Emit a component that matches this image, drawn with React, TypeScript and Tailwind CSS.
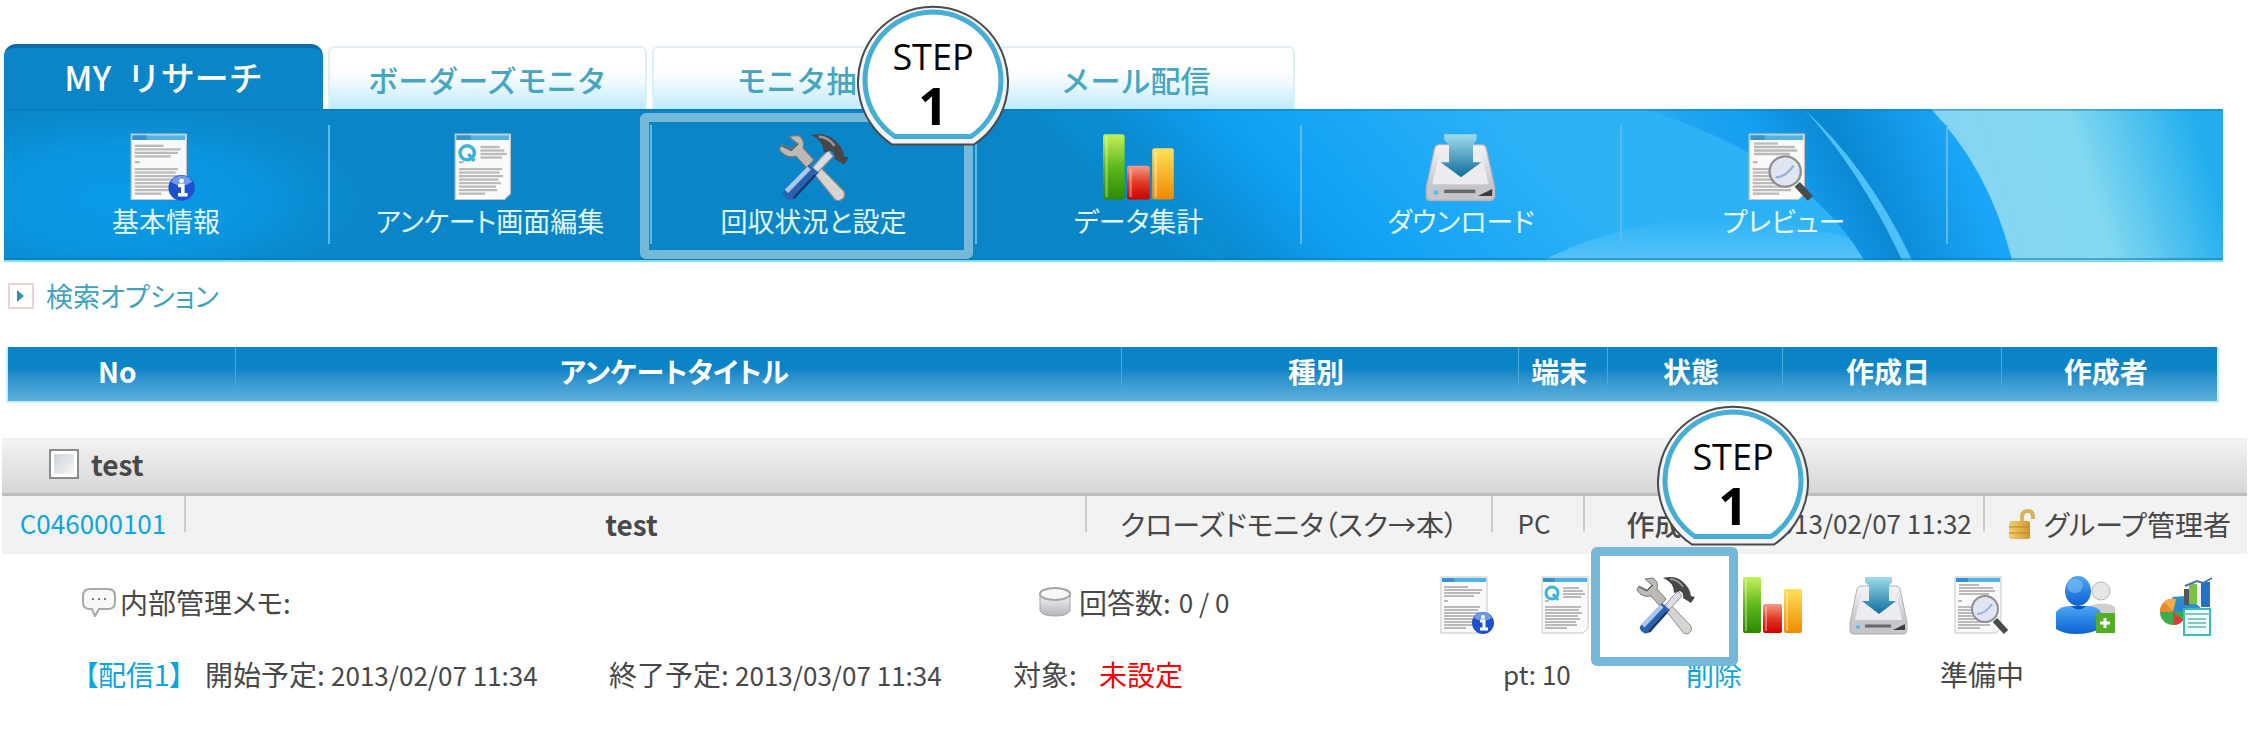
import React from 'react';

const IconGradients: React.FC = () => (
  <svg className="absolute h-0 w-0" aria-hidden="true">
    <defs>
      <linearGradient id="green" x1="0" y1="0" x2="0" y2="1">
        <stop offset="0" stopColor="#c4f25a" />
        <stop offset="0.5" stopColor="#5fb81c" />
        <stop offset="1" stopColor="#2b8a00" />
      </linearGradient>
      <linearGradient id="red" x1="0" y1="0" x2="0" y2="1">
        <stop offset="0" stopColor="#f79a88" />
        <stop offset="0.5" stopColor="#e03a22" />
        <stop offset="1" stopColor="#cc0000" />
      </linearGradient>
      <linearGradient id="orange" x1="0" y1="0" x2="0" y2="1">
        <stop offset="0" stopColor="#ffe15a" />
        <stop offset="1" stopColor="#ef8a00" />
      </linearGradient>
      <linearGradient id="blue" x1="0" y1="0" x2="0" y2="1">
        <stop offset="0" stopColor="#4da6f5" />
        <stop offset="1" stopColor="#0a62d0" />
      </linearGradient>
      <linearGradient id="arrow" x1="0" y1="0" x2="0" y2="1">
        <stop offset="0" stopColor="#9fdcea" />
        <stop offset="1" stopColor="#0f6d9c" />
      </linearGradient>
      <linearGradient id="silver" x1="0" y1="0" x2="0" y2="1">
        <stop offset="0" stopColor="#f4f4f6" />
        <stop offset="1" stopColor="#b4b5bb" />
      </linearGradient>
      <linearGradient id="gold" x1="0" y1="0" x2="1" y2="0">
        <stop offset="0" stopColor="#f3cf73" />
        <stop offset="1" stopColor="#cf962c" />
      </linearGradient>
    </defs>
  </svg>
);

type IconProps = { className?: string };

const Icon: React.FC<IconProps & { children: React.ReactNode }> = ({ className, children }) => (
  <svg viewBox="0 0 60 60" preserveAspectRatio="none" className={className} aria-hidden="true">
    {children}
  </svg>
);

const Page = () => (
  <>
    <path d="M1 1h46v51l-5 5H1z" fill="#fafafa" stroke="#c6c6c6" />
    <path d="M2 2h44v4H2z" fill="#4db4e4" />
    <path d="M2 2h12v4H2z" fill="#3693d0" />
  </>
);

const Lines = ({ rows }: { rows: number[][] }) => (
  <>
    {rows.map(([x, y, w], i) => (
      <path key={i} d={`M${x} ${y}h${w}`} stroke="#bababa" strokeWidth="2" />
    ))}
  </>
);

const lowerRows = [[4, 25, 4], [4, 31, 36], [4, 34, 34], [4, 37, 37], [4, 40, 33], [4, 43, 35], [4, 46, 31], [4, 49, 32], [4, 52, 22]];

const InfoIcon: React.FC<IconProps> = ({ className }) => (
  <Icon className={className}>
    <Page />
    <Lines rows={[[4, 11, 24], [4, 14, 38], [4, 17, 36], [4, 20, 30], ...lowerRows]} />
    <circle cx="43" cy="47" r="11" fill="#1c50d0" />
    <path d="M34 42a10 10 0 0 1 18 0q-9 6-18 0z" fill="#6f98ee" />
    <circle cx="43" cy="41" r="2" fill="#fff" />
    <path d="M40 45h4v8M40 53h8" stroke="#fff" strokeWidth="3" fill="none" />
  </Icon>
);

const QuestionIcon: React.FC<IconProps> = ({ className }) => (
  <Icon className={className}>
    <Page />
    <circle cx="11" cy="17" r="6" fill="none" stroke="#3fb3dc" strokeWidth="3" />
    <path d="M12 18l5 6" stroke="#3fb3dc" strokeWidth="3" />
    <Lines rows={[[22, 12, 16], [22, 15, 20], [22, 18, 22], [22, 21, 18], ...lowerRows]} />
  </Icon>
);

const ToolsIcon: React.FC<IconProps> = ({ className }) => (
  <Icon className={className}>
    <path d="M27 31l5-5L55 50q2 6-4 8-4 0-5-3z" fill="#d6d4d0" stroke="#8d8b88" />
    <path d="M9 3l8-1q6 4 4 11l9 10-6 7-9-10Q6 22 1 14l2-4 8 4 5-5z" fill="#bdbab5" stroke="#777" />
    <path d="M3 11l8 4 6-6" fill="none" stroke="#555" />
    <path d="M36 21l6-6 4 5-15 16-4-4z" fill="#d9dce0" stroke="#8e9298" />
    <path d="M27 2q13-3 20 4 7 6 8 14l4 1-4 6-8-5q1-5-3-7l-6 2Q38 6 27 2z" fill="#474747" />
    <path d="M34 3q9 1 13 8" stroke="#999" strokeWidth="2" fill="none" />
    <path d="M26 27l8 7L14 56q-6 4-10-3-1-2 2-5z" fill="#2b62ad" />
    <path d="M26 30L7 50" stroke="#a9c8ee" strokeWidth="4" />
    <path d="M31 36L13 56" stroke="#17366b" strokeWidth="2" />
  </Icon>
);

const ChartIcon: React.FC<IconProps> = ({ className }) => (
  <Icon className={className}>
    <rect x="0" y="1" width="18" height="56" rx="2" fill="url(#green)" />
    <rect x="20" y="28" width="19" height="29" rx="2" fill="url(#red)" />
    <rect x="41" y="13" width="18" height="44" rx="2" fill="url(#orange)" />
    <path d="M3 3v52M23 31v24M44 16v39" stroke="#fff" strokeWidth="2" opacity="0.35" />
  </Icon>
);

const DownloadIcon: React.FC<IconProps> = ({ className }) => (
  <Icon className={className}>
    <path d="M12 10h35q3 0 4 3l7 33v9q-1 3-4 3H5q-4 0-4-3v-8l7-34q1-3 4-3z" fill="url(#silver)" stroke="#b0b1b8" />
    <path d="M13 14h33l7 30H6z" fill="#ececf1" />
    <path d="M2 47h56v7q-1 3-4 3H5q-3 0-3-3z" fill="#c5c6cc" />
    <path d="M16 50h26" stroke="#66686e" strokeWidth="3" />
    <path d="M44 54l12-6v6z" fill="#3a3c40" />
    <circle cx="9" cy="51" r="2" fill="#4bc0e8" />
    <path d="M16 1h27v5l-3 4v15h7L30 38 13 25h7V10l-4-4z" fill="url(#arrow)" />
  </Icon>
);

const PreviewIcon: React.FC<IconProps> = ({ className }) => (
  <Icon className={className}>
    <Page />
    <Lines rows={[[5, 9, 20], [5, 12, 34], [5, 15, 36], [5, 18, 30], ...lowerRows]} />
    <path d="M41 44l11 12" stroke="#4b4b4b" strokeWidth="6" />
    <circle cx="31" cy="33" r="13" fill="#dfe6f2" stroke="#8f8f92" strokeWidth="2" />
    <path d="M23 38q8 0 15-10" stroke="#93b0e0" strokeWidth="2" fill="none" />
  </Icon>
);

const UsersIcon: React.FC<IconProps> = ({ className }) => (
  <Icon className={className}>
    <circle cx="46" cy="15" r="9" fill="#e6e6e6" stroke="#b5b5b5" />
    <path d="M34 30q20-6 28 3v10H34z" fill="#cfcfcf" />
    <path d="M1 36q4-6 14-6h17q12 0 14 7v15q-10 6-25 6-12 0-20-5z" fill="url(#blue)" />
    <path d="M16 30q8 7 15 0z" fill="#0a56b8" />
    <ellipse cx="23" cy="15" rx="13" ry="15" fill="url(#blue)" />
    <ellipse cx="20" cy="10" rx="8" ry="7" fill="#8fc7fa" opacity="0.5" />
    <rect x="41" y="37" width="19" height="20" fill="#53ae25" />
    <path d="M50 42v10M45 47h10" stroke="#fff" strokeWidth="3" />
  </Icon>
);

const ReportIcon: React.FC<IconProps> = ({ className }) => (
  <Icon className={className}>
    <path d="M12 21l14-1 14 11v9H20z" fill="#2f8fd0" />
    <circle cx="13" cy="36" r="13" fill="#3dab49" />
    <path d="M13 36L4 26q4-5 12-3z" fill="#f6ab4a" />
    <path d="M13 36L4 26q-5 5-4 10z" fill="#ef8a2a" />
    <path d="M13 36l4-13q8 2 9 12z" fill="#2b86d8" />
    <path d="M13 36l10 8q-3 5-9 5z" fill="#dd3c3c" />
    <path d="M24 13h6v16h-6z" fill="#555" />
    <path d="M29 8h8v20h-8z" fill="#7cc242" />
    <path d="M37 10h5v18h-5z" fill="#eee" />
    <path d="M41 6h9v25h-9z" fill="#2273c8" />
    <path d="M25 10l12-5 6 2 9-5" stroke="#4976a8" strokeWidth="2" fill="none" />
    <path d="M24 33h26v26H24z" fill="#f1fafa" stroke="#3bbab4" strokeWidth="2" />
    <path d="M24 38h26M28 43h18M28 47h18M28 51h18" stroke="#80c9c5" strokeWidth="2" />
  </Icon>
);

const StepBadge: React.FC<{ className: string }> = ({ className }) => (
  <div className={`absolute z-20 h-[141px] w-[152px] ${className}`}>
    <svg viewBox="0 0 152 141" className="absolute inset-0 h-full w-full" aria-hidden="true">
      <path d="M35 139.500A75 75 0 1 1 117 139.500Z" fill="#f4f4f6" stroke="#4a4a4c" strokeWidth="2" />
      <path d="M38 131.500A68 68 0 1 1 114 131.500Z" fill="#fff" stroke="#45aed6" strokeWidth="5" />
    </svg>
    <div className="relative flex flex-col items-center pt-8 font-['Open_Sans',sans-serif] text-black">
      <span className="text-[36px] leading-[40px]">STEP</span>
      <span className="text-[52px] leading-[56px] font-bold">1</span>
    </div>
  </div>
);

const NavBackdrop: React.FC = () => (
  <svg viewBox="0 0 2219 151" preserveAspectRatio="none" className="absolute inset-0 h-full w-full" aria-hidden="true">
    <defs>
      <linearGradient id="base" x1="1200" y1="147" x2="1435" y2="-71" gradientUnits="userSpaceOnUse">
        <stop offset="0" stopColor="#0a86c8" />
        <stop offset="0.35" stopColor="#0fa0f4" />
        <stop offset="1" stopColor="#2db2f6" />
      </linearGradient>
      <radialGradient id="glow">
        <stop offset="0" stopColor="#0a9ae8" />
        <stop offset="0.5" stopColor="#0a95de" />
        <stop offset="1" stopColor="#0a86c8" stopOpacity="0" />
      </radialGradient>
      <linearGradient id="streak" x1="1150" y1="50" x2="1110" y2="90" gradientUnits="userSpaceOnUse">
        <stop offset="0" stopColor="#0a94de" stopOpacity="0" />
        <stop offset="0.5" stopColor="#0a94de" />
        <stop offset="1" stopColor="#0a94de" stopOpacity="0" />
      </linearGradient>
      <linearGradient id="deep" x1="1680" y1="90" x2="1840" y2="0" gradientUnits="userSpaceOnUse">
        <stop offset="0" stopColor="#0c90e0" stopOpacity="0" />
        <stop offset="0.5" stopColor="#14a0f2" />
        <stop offset="1" stopColor="#0a80c8" />
      </linearGradient>
      <linearGradient id="wedge" x1="1860" y1="90" x2="1960" y2="50" gradientUnits="userSpaceOnUse">
        <stop offset="0" stopColor="#0a88d2" />
        <stop offset="1" stopColor="#1aa6f8" />
      </linearGradient>
      <linearGradient id="foam" x1="0" y1="0" x2="0" y2="1">
        <stop offset="0" stopColor="#4cc0f8" stopOpacity="0.1" />
        <stop offset="1" stopColor="#58c4f8" />
      </linearGradient>
      <linearGradient id="sky" x1="1960" y1="90" x2="2219" y2="10" gradientUnits="userSpaceOnUse">
        <stop offset="0" stopColor="#86d4f4" />
        <stop offset="0.45" stopColor="#84d9f0" />
        <stop offset="0.9" stopColor="#22aeee" />
      </linearGradient>
    </defs>
    <rect width="2219" height="151" fill="url(#base)" />
    <ellipse cx="120" cy="90" rx="280" ry="110" fill="url(#glow)" />
    <path d="M970 0h250v151H970z" fill="url(#streak)" opacity="0.5" />
    <path d="M1540 151Q1640 100 1760 112Q1850 125 1910 151z" fill="url(#foam)" />
    <path d="M1640 0H1810Q1870 60 1905 151H1860Q1800 50 1640 0z" fill="url(#deep)" />
    <path d="M1800 0H1930Q1990 70 2010 151H1900Q1865 60 1800 0z" fill="url(#wedge)" />
    <path d="M1800 0Q1865 60 1908 151H1898Q1855 60 1800 0z" fill="#4fc0f8" />
    <path d="M1927 0H2219V151H2008Q1985 60 1927 0z" fill="url(#sky)" />
    <rect y="0" width="2219" height="2" fill="#0a72ac" opacity="0.4" />
    <rect y="149" width="2219" height="2" fill="#0a72ac" opacity="0.5" />
  </svg>
);

const tabs = ['ボーダーズモニタ', 'モニタ抽出', 'メール配信'];

const navItems = [
  { label: '基本情報', icon: InfoIcon },
  { label: 'アンケート画面編集', icon: QuestionIcon },
  { label: '回収状況と設定', icon: ToolsIcon, step: true },
  { label: 'データ集計', icon: ChartIcon },
  { label: 'ダウンロード', icon: DownloadIcon },
  { label: 'プレビュー', icon: PreviewIcon },
];

const headings = ['No', 'アンケートタイトル', '種別', '端末', '状態', '作成日', '作成者'];

const rowActions = [
  ...navItems,
  { label: 'ユーザー追加', icon: UsersIcon },
  { label: 'レポート', icon: ReportIcon },
];

const Header: React.FC = () => (
  <header className="mr-8 ml-1 pt-11">
    <div className="grid h-[65px] grid-cols-4 gap-[5px] pr-[928px] [font-feature-settings:normal]">
      <button className="rounded-t-xl border-t-4 border-[#0b6ba6] bg-[#0a86c8] pb-1 text-[34px] leading-none font-medium whitespace-pre text-white">
        {'MY  リサーチ'}
      </button>
      {tabs.map((tab) => (
        <button
          key={tab}
          className="mt-[2px] rounded-t-md border-2 border-b-0 border-[#dcf1f6] bg-linear-to-b from-white from-40% to-[#bfeafa] text-[30px] leading-none font-medium text-[#46a6c2]"
        >
          {tab}
        </button>
      ))}
    </div>
    <nav className="relative h-[153px] border-b-2 border-[#7fe0f5]">
      <NavBackdrop />
      <ul className="relative grid h-full grid-cols-[minmax(0,326fr)_minmax(0,322fr)_minmax(0,325fr)_minmax(0,325fr)_minmax(0,320fr)_minmax(0,326fr)_minmax(0,275fr)]">
        {navItems.map(({ label, icon: NavIcon, step }) => (
          <li key={label} className="relative flex py-4">
            <a href="#" className="flex flex-1 flex-col items-center gap-[2px] border-r-2 border-[#5cbbe8] pt-2 text-[27px] leading-8 whitespace-nowrap text-[#e2f8ff]">
              <NavIcon className="h-[70px] w-[72px]" />
              {label}
            </a>
            {step && (
              <>
                <span className="absolute top-1 right-1 bottom-px -left-3 rounded-md border-[9px] border-[#74b9d8]" />
                <StepBadge className="-top-26 -right-8" />
              </>
            )}
          </li>
        ))}
      </ul>
    </nav>
  </header>
);

const SurveyTable: React.FC = () => (
  <table className="mt-[35px] block w-full text-[28px] leading-none text-[#484848]">
    <thead className="block">
      <tr className="mr-9 ml-[6px] grid h-[56px] grid-cols-[minmax(0,227fr)_minmax(0,888fr)_minmax(0,398fr)_minmax(0,89fr)_minmax(0,175fr)_minmax(0,220fr)_minmax(0,216fr)] border-2 border-t-0 border-[#c9eefa] bg-linear-to-b from-[#0a84c6] from-40% to-[#5cb2dc]">
        {headings.map((heading) => (
          <th
            key={heading}
            scope="col"
            className="mb-4 border-l border-[#4aa9dc] pt-[10px] pr-2 font-bold whitespace-nowrap text-white first:border-l-0"
          >
            {heading}
          </th>
        ))}
      </tr>
    </thead>
    <tbody className="mt-[35px] mr-2 ml-[2px] block whitespace-nowrap">
      <tr className="block">
        <td className="flex h-[58px] items-center border-t border-b-3 border-t-[#eee] border-b-[#bdbdbd] bg-linear-to-b from-[#f3f3f3] to-[#d6d6d6] pb-1 pl-[47px]">
          <label className="flex items-center gap-3 font-bold">
            <input
              type="checkbox"
              className="h-[30px] w-[30px] appearance-none border-2 border-[#8b8b8b] bg-linear-to-br from-[#c6ccd4] to-white p-0 ring-3 ring-white ring-inset"
            />
            test
          </label>
        </td>
      </tr>
      <tr className="grid h-[58px] grid-cols-[minmax(0,182fr)_minmax(0,901fr)_minmax(0,406fr)_minmax(0,92fr)_minmax(0,169fr)_minmax(0,231fr)_minmax(0,264fr)] bg-[#f2f2f2] text-center *:h-9 *:border-l-2 *:border-[#ccc] *:pt-[14px] *:first:border-l-0">
        <td className="text-[26px]">
          <a href="#" className="text-[#0ba5e2]">C046000101</a>
        </td>
        <td className="pr-2 font-bold">test</td>
        <td>クローズドモニタ（スク→本）</td>
        <td className="pr-2 text-[26px]">PC</td>
        <td className="font-medium">作成中</td>
        <td className="text-[26px]">2013/02/07 11:32</td>
        <td>
          <div className="flex items-center justify-end gap-2 pr-4">
            <svg viewBox="0 0 28 32" className="-my-1 h-8 w-7 shrink-0" aria-hidden="true">
              <path d="M14 14V9q0-6 6-6 5 0 5 6v2" fill="none" stroke="#d9b35c" strokeWidth="4" />
              <rect x="1" y="13" width="21" height="18" rx="2" fill="url(#gold)" />
              <path d="M1 19h21M1 25h21" stroke="#b98424" />
            </svg>
            グループ管理者
          </div>
        </td>
      </tr>
      <tr className="grid h-[97px] grid-cols-[minmax(0,957fr)_minmax(0,401fr)_minmax(0,807fr)] pt-[6px] pl-20">
        <td className="flex items-center gap-1 pb-2">
          <svg viewBox="0 0 34 30" className="h-[30px] w-[34px]" aria-hidden="true">
            <path d="M8 2h18q7 0 7 7v6q0 7-7 7h-9l-4 7-3-7H8q-7 0-7-7V9q0-7 7-7z" fill="#f8f8f8" stroke="#a8a8a8" strokeWidth="2" />
            <path d="M10 12h2M16 12h2M22 12h2" stroke="#777" strokeWidth="2" />
          </svg>
          内部管理メモ:
        </td>
        <td className="flex items-center gap-2 pb-2">
          <svg viewBox="0 0 32 30" className="h-[30px] w-8" aria-hidden="true">
            <path d="M1 7v17q3 5 15 5t15-5V7z" fill="url(#silver)" stroke="#a4a4a4" />
            <ellipse cx="16" cy="7" rx="15" ry="6" fill="#f7f7f7" stroke="#a4a4a4" strokeWidth="2" />
          </svg>
          回答数: <span className="text-[26px]">0 / 0</span>
        </td>
        <td className="grid grid-cols-[101px_95px_107px_106px_105px_101px_105px_60px] items-center">
          {rowActions.map(({ label, icon: ActionIcon, step }) => (
            <button key={label} aria-label={label} className="relative h-[60px] w-[60px]">
              <ActionIcon className="h-[60px] w-[60px]" />
              {step && (
                <>
                  <span className="absolute -top-[29px] -left-[45px] z-10 h-[119px] w-[147px] rounded-md border-[9px] border-[#74b9d8]" />
                  <StepBadge className="-top-[171px] left-[21px]" />
                </>
              )}
            </button>
          ))}
        </td>
      </tr>
      <tr className="grid h-[46px] grid-cols-[minmax(0,121fr)_minmax(0,404fr)_minmax(0,404fr)_minmax(0,490fr)_minmax(0,183fr)_minmax(0,254fr)_minmax(0,307fr)] items-center pl-[82px]">
        <td>
          <a href="#" className="text-[#0ba5e2]">【配信1】</a>
        </td>
        <td>開始予定: <span className="text-[26px]">2013/02/07 11:34</span></td>
        <td>終了予定: <span className="text-[26px]">2013/03/07 11:34</span></td>
        <td>対象: <span className="ml-4 text-[#f00]">未設定</span></td>
        <td className="text-[26px]">pt: 10</td>
        <td>
          <a href="#" className="text-[#0ba5e2]">削除</a>
        </td>
        <td>準備中</td>
      </tr>
    </tbody>
  </table>
);

const App: React.FC = () => {
  return (
    <main className="bg-white pb-12 font-['Noto_Sans_CJK_JP',sans-serif] [font-feature-settings:'palt']">
      <IconGradients />
      <Header />
      <button className="mt-[18px] ml-2 flex items-center gap-3 text-[27px] leading-8 text-[#3fa3bf]">
        <svg viewBox="0 0 26 26" className="h-[26px] w-[26px]" aria-hidden="true">
          <path d="M1 1h24v24H1z" fill="#fff" stroke="#ecd3d0" strokeWidth="2" />
          <path d="M9 7l7 6-7 6z" fill="#2f8fb4" />
        </svg>
        検索オプション
      </button>
      <SurveyTable />
    </main>
  );
};

export default App;
